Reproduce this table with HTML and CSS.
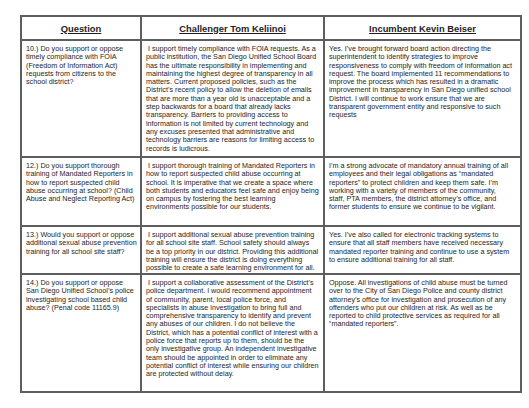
FILE: index.html
```html
<!DOCTYPE html>
<html>
<head>
<meta charset="utf-8">
<link rel="stylesheet" href="styles.css">
</head>
<body>
<table class="qa">
  <colgroup>
    <col class="c-q">
    <col class="c-a">
    <col class="c-b">
  </colgroup>
  <tr class="head">
    <th><span>Question</span></th>
    <th><span>Challenger Tom Keliinoi</span></th>
    <th><span>Incumbent Kevin Beiser</span></th>
  </tr>
  <tr class="r1">
    <td>10.) Do you support or oppose<br>timely compliance with FOIA<br>(Freedom of Information Act)<br>requests from citizens to the<br>school district?</td>
    <td>&nbsp;I support timely compliance with FOIA requests. As a<br>public institution, the San Diego Unified School Board<br>has the ultimate responsibility in implementing and<br>maintaining the highest degree of transparency in all<br>matters. Current proposed policies, such as the<br>District’s recent policy to allow the deletion of emails<br>that are more than a year old is unacceptable and a<br>step backwards for a board that already lacks<br>transparency. Barriers to providing access to<br>information is not limited by current technology and<br>any excuses presented that administrative and<br>technology barriers are reasons for limiting access to<br>records is ludicrous.</td>
    <td>Yes. I’ve brought forward board action directing the<br>superintendent to identify strategies to improve<br>responsiveness to comply with freedom of information act<br>request. The board implemented 11 recommendations to<br>improve the process which has resulted in a dramatic<br>improvement in transparency in San Diego unified school<br>District. I will continue to work ensure that we are<br>transparent government entity and responsive to such<br>requests</td>
  </tr>
  <tr class="r2">
    <td>12.) Do you support thorough<br>training of Mandated Reporters in<br>how to report suspected child<br>abuse occurring at school? (Child<br>Abuse and Neglect Reporting Act)</td>
    <td>&nbsp;I support thorough training of Mandated Reporters in<br>how to report suspected child abuse occurring at<br>school. It is imperative that we create a space where<br>both students and educators feel safe and enjoy being<br>on campus by fostering the best learning<br>environments possible for our students.</td>
    <td>I’m a strong advocate of mandatory annual training of all<br>employees and their legal obligations as “mandated<br>reporters” to protect children and keep them safe. I’m<br>working with a variety of members of the community,<br>staff, PTA members, the district attorney’s office, and<br>former students to ensure we continue to be vigilant.</td>
  </tr>
  <tr class="r3">
    <td>13.) Would you support or oppose<br>additional sexual abuse prevention<br>training for all school site staff?</td>
    <td>&nbsp;I support additional sexual abuse prevention training<br>for all school site staff. School safety should always<br>be a top priority in our district. Providing this additional<br>training will ensure the district is doing everything<br>possible to create a safe learning environment for all.</td>
    <td>Yes. I’ve also called for electronic tracking systems to<br>ensure that all staff members have received necessary<br>mandated reporter training and continue to use a system<br>to ensure additional training for all staff.</td>
  </tr>
  <tr class="r4">
    <td>14.) Do you support or oppose<br>San Diego Unified School’s police<br>investigating school based child<br>abuse? (Penal code 11165.9)</td>
    <td>&nbsp;I support a collaborative assessment of the District’s<br>police department. I would recommend appointment<br>of community, parent, local police force, and<br>specialists in abuse investigation to bring full and<br>comprehensive transparency to identify and prevent<br>any abuses of our children. I do not believe the<br>District, which has a potential conflict of interest with a<br>police force that reports up to them, should be the<br>only investigative group. An independent investigative<br>team should be appointed in order to eliminate any<br>potential conflict of interest while ensuring our children<br>are protected without delay.</td>
    <td>Oppose. All investigations of child abuse must be turned<br>over to the City of San Diego Police and county district<br>attorney’s office for investigation and prosecution of any<br>offenders who put our children at risk. As well as be<br>reported to child protective services as required for all<br>“mandated reporters”.</td>
  </tr>
</table>
</body>
</html>
```
FILE: styles.css
```css
html, body {
  margin: 0;
  padding: 0;
  background: #ffffff;
}
body {
  padding: 15px 0 0 20px;
  font-family: "Liberation Sans", Arial, sans-serif;
  color: #1e1e1e;
}
.qa {
  border-collapse: collapse;
  table-layout: fixed;
  width: 500px;
  border: 2px solid #4a4a4a;
}
.c-q { width: 120px; }
.c-a { width: 183px; }
.c-b { width: 197px; }
.qa th, .qa td {
  border: 2px solid #5e5e5e;
  padding: 4px 3px 0 4px;
  vertical-align: top;
  text-align: left;
  font-size: 7.2px;
  line-height: 8.3px;
  white-space: nowrap;
  overflow: hidden;
}
.qa th {
  font-size: 9.4px;
  line-height: 11px;
  font-weight: bold;
  text-align: center;
  vertical-align: middle;
  padding: 0;
}
.qa th span {
  text-decoration: underline;
}
.head { height: 24px; }
.r1 { height: 117px; }
.r2 { height: 69px; }
.r3 { height: 48px; }
.r4 { height: 118px; }
```
